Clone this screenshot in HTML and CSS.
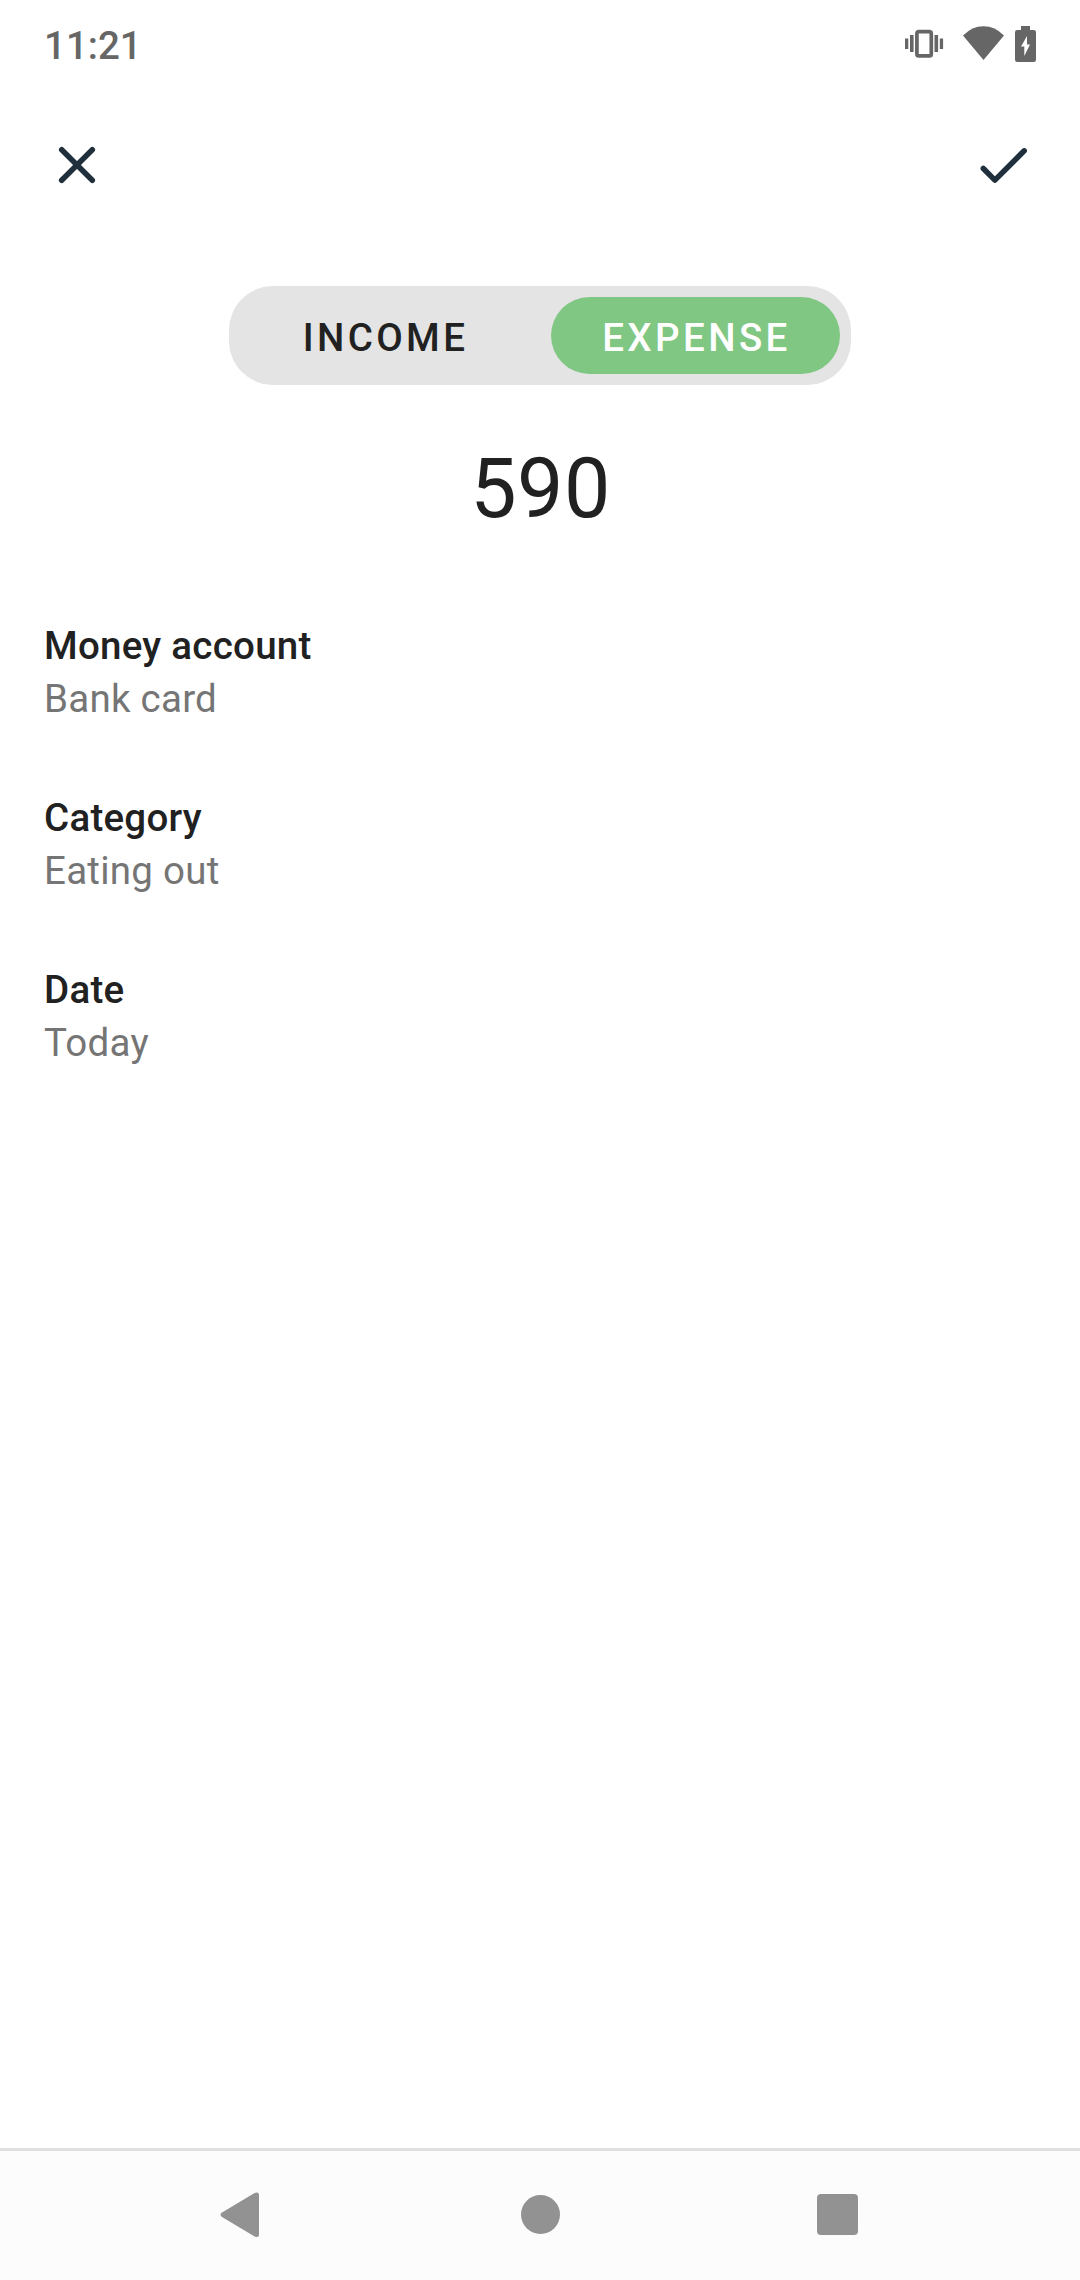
FILE: index.html
```html
<!DOCTYPE html>
<html lang="en">
<head>
<meta charset="utf-8">
<title>Expense</title>
<link rel="stylesheet" href="styles.css">
</head>
<body>
<div class="screen">
  <header class="status">
    <span class="clock">11:21</span>
    <svg class="status-icons" width="136" height="40" viewBox="0 0 136 40" aria-hidden="true">
      <rect x="11.900" y="7.700" width="14.400" height="24.200" rx="2" fill="none" stroke="currentColor" stroke-width="3.700"/>
      <path d="M5 11h3.600v17H5zM0 14.600h3.300v10.400H0zM29.500 11h3.600v17h-3.600zM34.800 14.600h3.300v10.400h-3.300z" fill="currentColor"/>
      <path d="M58 11.6Q67 2.3 78.500 2.300T99 11.600L78.500 36Z" fill="currentColor"/>
      <path d="M116 2h9v4h3.800a2.200 2.200 0 0 1 2.200 2.200v27.600a2.200 2.200 0 0 1-2.200 2.200h-16.600a2.200 2.200 0 0 1-2.200-2.200V8.200a2.200 2.200 0 0 1 2.200-2.200H116z" fill="currentColor"/>
      <path d="M122 12v8.500h3L119.300 32v-9.500H116z" fill="#fff"/>
    </svg>
  </header>
  <nav class="toolbar">
    <svg width="66" height="66" viewBox="0 0 66 66" role="img" aria-label="Close">
      <path class="stroke" d="M17.700 17.700l30.600 30.600M48.300 17.700L17.700 48.300"/>
    </svg>
    <svg width="66" height="66" viewBox="0 0 66 66" role="img" aria-label="Save">
      <path class="stroke" d="M13.300 36.500l11.600 11.600L54.200 18.800"/>
    </svg>
  </nav>
  <main class="content">
    <div class="toggle">
      <button class="option">INCOME</button>
      <button class="option selected">EXPENSE</button>
    </div>
    <div class="amount">590</div>
    <dl class="fields">
      <div><dt>Money account</dt><dd>Bank card</dd></div>
      <div><dt>Category</dt><dd>Eating out</dd></div>
      <div><dt>Date</dt><dd>Today</dd></div>
    </dl>
  </main>
  <footer class="navbar">
    <svg width="40" height="46" viewBox="0 0 40 46" aria-hidden="true"><path d="M1.600 20.700L34.600.900Q39 -.900 39 3.500v39Q39 46.400 34.600 44.500L1.600 24.700Q-.600 22.700 1.600 20.700Z" fill="currentColor"/></svg>
    <span class="home"></span>
    <span class="recent"></span>
  </footer>
</div>
</body>
</html>
```
FILE: styles.css
```css
* { box-sizing: border-box; }
body {
  margin: 0;
  background: #fff;
  color: #212121;
  font: 400 38.5px/53px Roboto, sans-serif;
}
.screen {
  display: flex;
  flex-direction: column;
  width: 1080px;
  height: 2280px;
}
.status {
  display: flex;
  justify-content: space-between;
  height: 88px;
  padding: 19px 39px 0 44px;
  color: #666;
}
.clock { font-weight: 500; }
.status-icons { margin-top: 5px; }
.toolbar {
  display: flex;
  justify-content: space-between;
  height: 154px;
  padding: 44px 44px 0;
}
.stroke {
  fill: none;
  stroke: #1f2f3c;
  stroke-width: 5.5;
  stroke-linecap: round;
  stroke-linejoin: round;
}
.content {
  flex: 1;
  display: flex;
  flex-direction: column;
  padding: 44px 44px 0;
}
.toggle {
  display: flex;
  align-self: center;
  align-items: center;
  justify-content: space-between;
  width: 622px;
  height: 99px;
  padding: 0 11px;
  border-radius: 44px;
  background: #e4e4e4;
}
.option {
  width: 291px;
  height: 77px;
  padding: 4px 0 0;
  border: 0;
  border-radius: 38.5px;
  background: none;
  color: #212121;
  font: inherit;
  font-weight: 500;
  letter-spacing: 3.4px;
}
.option.selected {
  width: 289px;
  padding-left: 2px;
  background: #81c784;
  color: #fff;
}
.amount {
  margin-top: 55px;
  padding-left: 1px;
  font-size: 82.5px;
  line-height: 97px;
  letter-spacing: 0.5px;
  text-align: center;
}
.fields {
  display: flex;
  flex-direction: column;
  gap: 66px;
  margin: 82px 0 0;
  letter-spacing: 0.26px;
}
dt { font-weight: 500; }
dd { margin: 0; color: #757575; }
.navbar {
  display: flex;
  align-items: center;
  height: 132px;
  padding-left: 220px;
  padding-bottom: 2px;
  border-top: 3px solid #e0e0e0;
  background: #fcfcfc;
  color: #929292;
}
.home {
  width: 39px;
  height: 39px;
  margin-left: 261px;
  border-radius: 50%;
  background: currentColor;
}
.recent {
  width: 41px;
  height: 41px;
  margin-left: 257px;
  border-radius: 4px;
  background: currentColor;
}
```
